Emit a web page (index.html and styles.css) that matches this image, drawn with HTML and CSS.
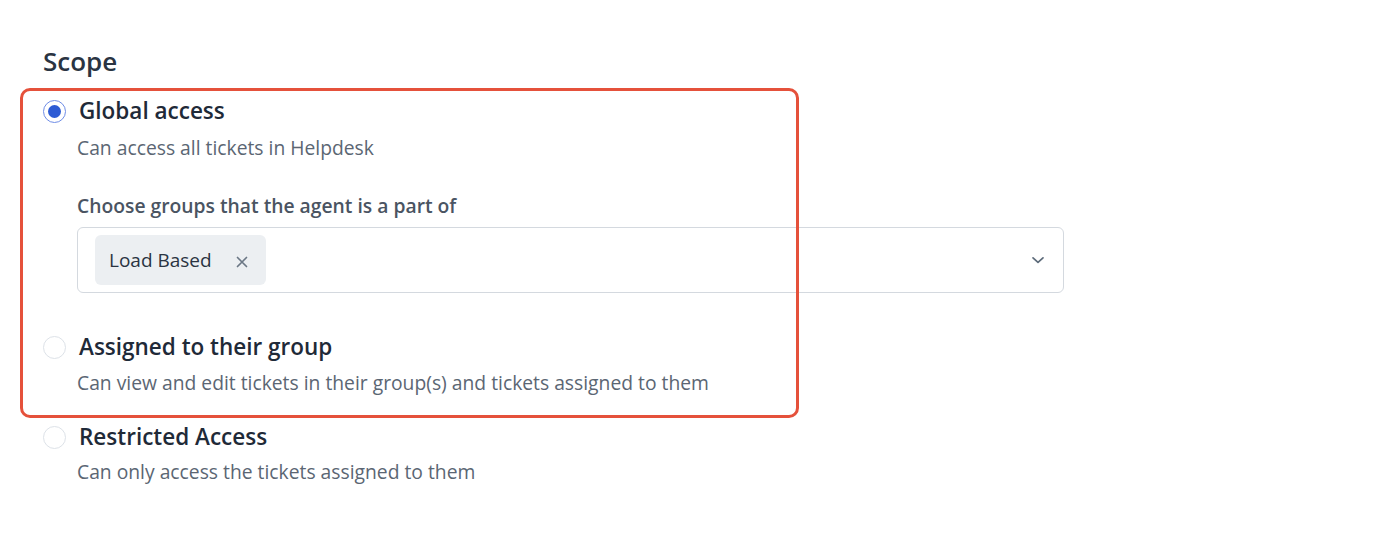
FILE: index.html
```html
<!DOCTYPE html>
<html>
<head>
<meta charset="utf-8">
<link rel="stylesheet" href="styles.css">
</head>
<body>
<div class="page">
  <h2 class="title">Scope</h2>
  <div class="options">
    <div class="highlight"></div>
    <div class="option">
      <div class="row">
        <span class="radio checked"></span>
        <span class="label">Global access</span>
      </div>
      <div class="desc">Can access all tickets in Helpdesk</div>
      <div class="groups">
        <div class="field-label">Choose groups that the agent is a part of</div>
        <div class="select">
          <span class="chip">Load Based
            <svg class="x" width="12" height="12" viewBox="0 0 12 12"><path d="M1.5 1.5L10.5 10.5M10.5 1.5L1.5 10.5" stroke="#6b7785" stroke-width="1.7" stroke-linecap="round"/></svg>
          </span>
          <svg class="chev" width="14" height="10" viewBox="0 0 14 10"><path d="M2 2.8L7 7.4L12 2.8" fill="none" stroke="#5d6b7a" stroke-width="1.7" stroke-linecap="round" stroke-linejoin="round"/></svg>
        </div>
      </div>
    </div>
    <div class="option second">
      <div class="row">
        <span class="radio"></span>
        <span class="label">Assigned to their group</span>
      </div>
      <div class="desc">Can view and edit tickets in their group(s) and tickets assigned to them</div>
    </div>
    <div class="option third">
      <div class="row">
        <span class="radio"></span>
        <span class="label">Restricted Access</span>
      </div>
      <div class="desc">Can only access the tickets assigned to them</div>
    </div>
  </div>
</div>
</body>
</html>
```

FILE: styles.css
```css
* { box-sizing: border-box; }
html, body { margin: 0; padding: 0; background: #fff; }
body {
  font-family: "Segoe UI", "Open Sans", "Noto Sans", sans-serif;
  color: #1f2d3d;
}
.page { padding: 44px 0 0 43px; }
.title {
  margin: 0;
  font-size: 26px;
  font-weight: 600;
  line-height: 34px;
  color: #2a3442;
}
.options { position: relative; margin-top: 18px; }
.highlight {
  position: absolute;
  left: -23px;
  top: -8px;
  width: 779px;
  height: 330px;
  border: 3px solid #e5513b;
  border-radius: 10px;
  pointer-events: none;
}
.option { display: flex; flex-direction: column; }
.row { display: flex; align-items: center; gap: 12px; height: 30px; }
.radio {
  width: 23px; height: 23px;
  border-radius: 50%;
  border: 1.5px solid #dde2e8;
  flex: none;
  background: #fff;
}
.radio.checked {
  border: 1.5px solid #6f8de6;
  display: flex; align-items: center; justify-content: center;
}
.radio.checked::after {
  content: "";
  width: 13px; height: 13px;
  border-radius: 50%;
  background: #2d5bd4;
}
.label {
  font-size: 22.5px;
  font-weight: 600;
  line-height: 30px;
  color: #1f2a38;
  margin-left: 1px;
}
.desc {
  margin-left: 34px;
  margin-top: 9px;
  font-size: 19.3px;
  line-height: 26px;
  color: #5b6673;
}
.groups { margin-left: 34px; margin-top: 32px; }
.field-label {
  font-size: 19.3px;
  font-weight: 600;
  line-height: 26px;
  color: #4a5462;
}
.select {
  margin-top: 8px;
  width: 987px;
  height: 66px;
  border: 1px solid #d4d9df;
  border-radius: 6px;
  display: flex;
  align-items: center;
  justify-content: space-between;
  padding: 0 18px 0 17px;
}
.chip {
  display: flex;
  align-items: center;
  gap: 24px;
  height: 50px;
  padding: 0 18px 0 14px;
  background: #eceff2;
  border-radius: 6px;
  font-size: 19px;
  font-weight: 500;
  color: #2a3442;
}
.x { margin-top: 3px; }
.second { margin-top: 39px; }
.second .desc { margin-top: 8px; }
.third { margin-top: 26px; }
.third .desc { margin-top: 7px; }
```
